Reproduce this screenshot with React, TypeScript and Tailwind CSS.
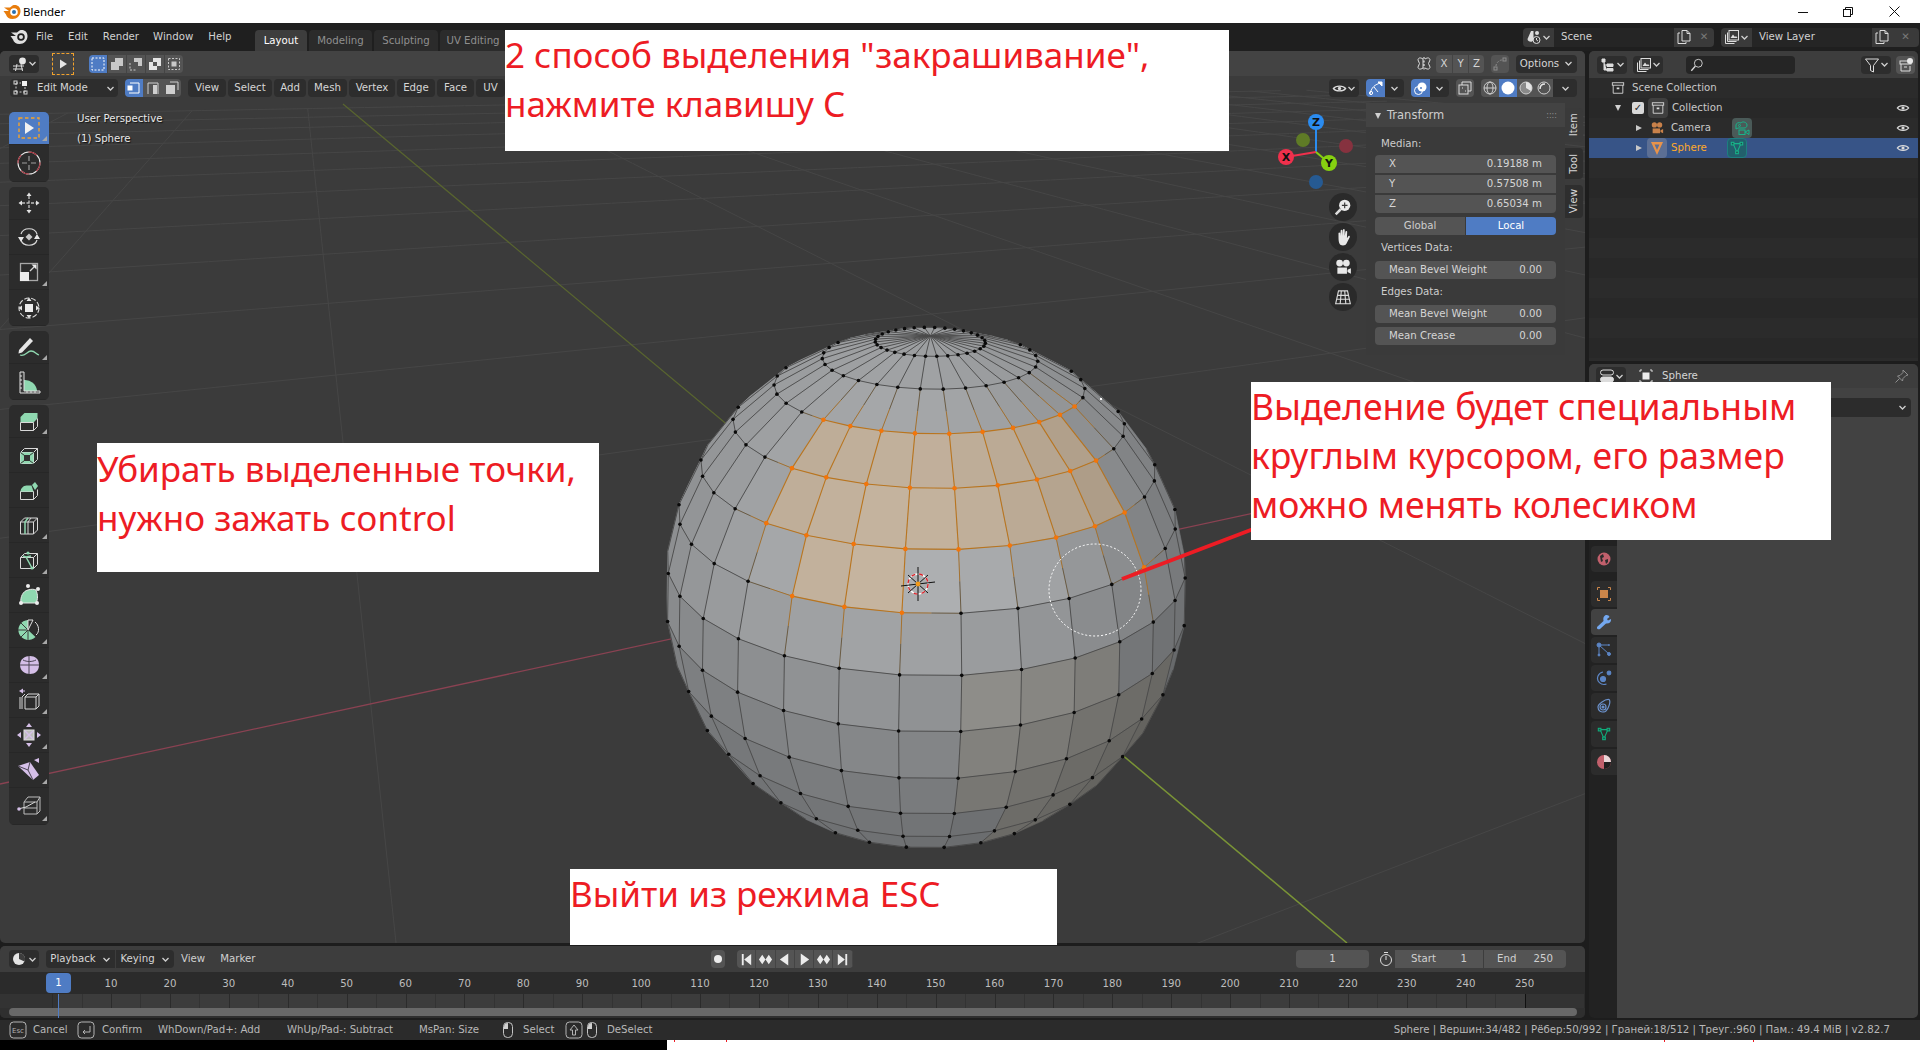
import { ReactNode } from 'react'

const GREEN = '#8fd8b0'
const PURPLE = '#d5bfe8'

// ---- 3D scene -------------------------------------------------------------
const CX = 926
const CY = 588
const DIST = 4.5
const TILT = (27 * Math.PI) / 180
const ROLL = (1 * Math.PI) / 180
const SCALE = 261 * Math.sqrt(DIST * DIST - 1)
const YAW = (26.5 * Math.PI) / 180

type P = { x: number; y: number; f: number }

function project(sx: number, up: number, fz: number): P & { z: number } {
  const y = up * Math.cos(TILT) - fz * Math.sin(TILT)
  const z = up * Math.sin(TILT) + fz * Math.cos(TILT)
  const k = SCALE / (DIST - z)
  const dx = sx * k
  const dy = -y * k
  return {
    x: CX + dx * Math.cos(ROLL) - dy * Math.sin(ROLL),
    y: CY + dx * Math.sin(ROLL) + dy * Math.cos(ROLL),
    f: z * DIST - 1,
    z,
  }
}

const SEG = 32
const RINGS = 16
const STEP = (11.25 * Math.PI) / 180
const OFFSET = (-4.5 * Math.PI) / 180

function vert(ring: number, k: number) {
  const phi = ring * STEP
  const th = OFFSET + k * STEP
  return project(Math.sin(phi) * Math.sin(th), Math.cos(phi), Math.sin(phi) * Math.cos(th))
}

function isSelFace(ring: number, k: number) {
  if ((ring === 3 || ring === 4) && k >= -3 && k <= 4) return true
  return ring === 5 && k >= -2 && k <= -1
}

function isSelVert(ring: number, k: number) {
  if (ring === 3) return k >= -3 && k <= 6
  if (ring === 4 || ring === 5) return k >= -3 && k <= 5
  if (ring === 6) return (k >= -2 && k <= 0) || k === 5
  return false
}

function shade(px: number, py: number, sel: boolean) {
  const sx = (px - CX) / 261
  const sy = (CY - py) / 261
  let v = 176 - 46 * sx * sx - 12 * sx
  v -= sy > 0 ? 20 * sy * sy : 66 * -sy
  let r = v - 2
  let g = v
  let b = v + 2
  if (sy < -0.3 && sx > 0.2) {
    r += 3
    b -= 6
  }
  if (sel) {
    r = r * 0.72 + 255 * 0.28
    g = g * 0.72 + 189 * 0.28
    b = b * 0.72 + 109 * 0.28
  }
  return `rgb(${r | 0},${g | 0},${b | 0})`
}

function Sphere() {
  const faces: ReactNode[] = []
  const edges: ReactNode[] = []
  const dots: ReactNode[] = []
  const wrap = (k: number) => (k >= SEG - 8 ? k - SEG : k)

  for (let ring = 0; ring < RINGS; ring++) {
    for (let i = 0; i < SEG; i++) {
      const k = wrap(i)
      const a = vert(ring, k)
      const b = vert(ring, k + 1)
      const c = vert(ring + 1, k + 1)
      const d = vert(ring + 1, k)
      const mx = (a.x + b.x + c.x + d.x) / 4
      const my = (a.y + b.y + c.y + d.y) / 4
      if (a.f + b.f + c.f + d.f <= -0.2) continue
      const fill = shade(mx, my, isSelFace(ring, k))
      faces.push(
        <polygon
          key={`${ring}-${i}`}
          points={`${a.x},${a.y} ${b.x},${b.y} ${c.x},${c.y} ${d.x},${d.y}`}
          fill={fill}
          stroke={fill}
          strokeWidth={0.6}
        />,
      )
    }
  }

  const edge = (key: string, a: P, b: P, sa: boolean, sb: boolean) => {
    if (a.f + b.f <= -0.1) return
    if (sa && sb) {
      edges.push(<line key={key} x1={a.x} y1={a.y} x2={b.x} y2={b.y} stroke="#b9751f" strokeWidth={1.1} />)
    } else if (sa || sb) {
      const mx = (a.x + b.x) / 2
      const my = (a.y + b.y) / 2
      edges.push(
        <g key={key} strokeWidth={1}>
          <line x1={a.x} y1={a.y} x2={mx} y2={my} stroke={sa ? '#a5722f' : '#6b5c44'} />
          <line x1={mx} y1={my} x2={b.x} y2={b.y} stroke={sb ? '#a5722f' : '#6b5c44'} />
        </g>,
      )
    } else {
      edges.push(<line key={key} x1={a.x} y1={a.y} x2={b.x} y2={b.y} stroke="#4a4a4a" strokeWidth={0.9} />)
    }
  }

  for (let i = 0; i < SEG; i++) {
    const k = wrap(i)
    for (let ring = 0; ring < RINGS; ring++) {
      edge(`m${ring}-${i}`, vert(ring, k), vert(ring + 1, k), isSelVert(ring, k), isSelVert(ring + 1, k))
      if (ring > 0) {
        edge(`r${ring}-${i}`, vert(ring, k), vert(ring, k + 1), isSelVert(ring, k), isSelVert(ring, k + 1))
      }
    }
  }

  for (let ring = 1; ring < RINGS; ring++) {
    for (let i = 0; i < SEG; i++) {
      const k = wrap(i)
      const v = vert(ring, k)
      if (v.f <= -0.05) continue
      const s = isSelVert(ring, k)
      dots.push(<circle key={`d${ring}-${i}`} cx={v.x} cy={v.y} r={s ? 2.3 : 1.8} fill={s ? '#f2750a' : '#0a0a0a'} />)
    }
  }

  return (
    <g>
      {faces}
      {edges}
      {dots}
    </g>
  )
}

function Grid() {
  const lines: ReactNode[] = []
  const ground = (gx: number, gy: number) => {
    const sx = gx * Math.cos(YAW) + gy * Math.sin(YAW)
    const fz = -gx * Math.sin(YAW) + gy * Math.cos(YAW)
    return { sx, fz }
  }
  const seg = (x1: number, y1: number, x2: number, y2: number, key: string) => {
    const pts: string[] = []
    for (let t = 0; t <= 1; t += 0.02) {
      const g = ground(x1 + (x2 - x1) * t, y1 + (y2 - y1) * t)
      if (g.fz * Math.cos(TILT) > DIST - 0.4) continue
      const p = project(g.sx, 0, g.fz)
      pts.push(`${p.x},${p.y}`)
    }
    lines.push(<polyline key={key} points={pts.join(' ')} fill="none" stroke="#464646" strokeWidth={1} />)
  }
  for (let i = -12; i <= 12; i++) {
    if (i === 0) continue
    seg(i * 2, -24, i * 2, 24, `a${i}`)
    seg(-24, i * 2, 24, i * 2, `b${i}`)
  }
  return <g>{lines}</g>
}

function SceneCanvas() {
  return (
    <svg className="absolute inset-0" width={1585} height={892} viewBox="0 51 1585 892">
      <rect x={0} y={51} width={1585} height={892} fill="#3b3b3b" />
      <Grid />
      <line x1={0} y1={784} x2={1300} y2={503} stroke="#8a4252" strokeWidth={1.3} />
      <line x1={343} y1={104} x2={760} y2={452} stroke="#59652f" strokeWidth={1.2} />
      <line x1={760} y1={452} x2={1347} y2={943} stroke="#7a9436" strokeWidth={1.5} />
      <Sphere />
      <circle cx={1095} cy={590} r={46} fill="none" stroke="#fff" strokeWidth={1} strokeDasharray="2 2" />
      <rect x={1100} y={398} width={2} height={2} fill="#fff" />
      <g>
        <circle cx={918} cy={584} r={10} fill="none" stroke="#fff" strokeWidth={1.4} />
        <circle cx={918} cy={584} r={10} fill="none" stroke="#d8232a" strokeWidth={1.4} strokeDasharray="4 4" />
        <path d="M918 567v34M901 586l34-4M908 575l20 18M908 593l20-18" stroke="#111" strokeWidth={1} />
        <circle cx={918} cy={584} r={2.4} fill="#f29a1a" />
      </g>
    </svg>
  )
}

// ---- small icons ----------------------------------------------------------
function Chevron({ className = '' }: { className?: string }) {
  return (
    <svg width={9} height={9} viewBox="0 0 9 9" className={className}>
      <path d="M1.5 3 4.5 6 7.5 3" fill="none" stroke="#cfcfcf" strokeWidth={1.3} />
    </svg>
  )
}

function Ico({ children, size = 16 }: { children: ReactNode; size?: number }) {
  return (
    <svg width={size} height={size} viewBox="0 0 16 16" fill="none" stroke="#dcdcdc" strokeWidth={1}>
      {children}
    </svg>
  )
}

const Arrow = () => <path d="M5 3.5v9l7-4.5z" fill="#e6e6e6" stroke="none" />

function EditorView() {
  return (
    <Ico>
      <path d="M1 10h11M1 13h10M5 8 3.5 15M9 8l1.5 7" />
      <circle cx={10.5} cy={5} r={3.4} fill="#e6e6e6" stroke="none" />
    </Ico>
  )
}

function Eye({ s = 14 }: { s?: number }) {
  return (
    <Ico size={s}>
      <path d="M1.5 8C4 4.5 12 4.5 14.5 8 12 11.5 4 11.5 1.5 8z" strokeWidth={1.4} />
      <circle cx={8} cy={8} r={1.8} fill="#dcdcdc" stroke="none" />
    </Ico>
  )
}

function SceneIcon() {
  return (
    <Ico>
      <path d="M5 2 1.5 10c0 3 5 4 6 1V2z" fill="#dcdcdc" stroke="none" />
      <circle cx={11} cy={4} r={2} fill="#dcdcdc" stroke="none" />
      <circle cx={10.5} cy={11} r={3.5} />
      <path d="M10.5 9v2l1.5 1" />
    </Ico>
  )
}

function LayerIcon({ s = 16 }: { s?: number }) {
  return (
    <Ico size={s}>
      <rect x={5} y={1.5} width={9.5} height={9.5} fill="#3a3a3a" />
      <path d="M6.5 9 9 5.5 11 8l1-1 1.5 2z" fill="#dcdcdc" stroke="none" />
      <path d="M3.5 3.5v9h9M1.5 5.5v9h9" />
    </Ico>
  )
}

function CopyIcon() {
  return (
    <Ico>
      <path d="M6 1.5h5l3 3V12H6z" />
      <path d="M4 4H2v10.5h8V13" />
      <path d="M11 1.5v3h3" />
    </Ico>
  )
}

function Collection({ s = 14 }: { s?: number }) {
  return (
    <Ico size={s}>
      <rect x={1.5} y={2} width={13} height={2.8} />
      <path d="M2.5 4.8V14h11V4.8" />
      <path d="M6.5 8.5h3" strokeWidth={2} />
    </Ico>
  )
}

function CameraIcon({ c = '#c9814a', s = 14 }: { c?: string; s?: number }) {
  return (
    <svg width={s} height={s} viewBox="0 0 16 16" fill={c}>
      <circle cx={5} cy={4.5} r={3} />
      <circle cx={11} cy={4.5} r={3} />
      <rect x={3} y={8.5} width={8.5} height={5.5} />
      <path d="M12 10.5 15 9v5l-3-1.5z" />
    </svg>
  )
}

function CameraData() {
  return (
    <svg width={16} height={16} viewBox="0 0 16 16" fill="none" stroke="#18b48a" strokeWidth={1}>
      <path d="M2 9V5c0-2 3-3 5-2 1-2 6-1 6 2 0 2-1 3-3 3H4z" />
      <circle cx={5.5} cy={5.5} r={1} />
      <rect x={5} y={10} width={6} height={4.5} />
      <path d="M11 12l4-2v4.500z" />
    </svg>
  )
}

function MeshTri({ c = '#18b48a', s = 14 }: { c?: string; s?: number }) {
  return (
    <svg width={s} height={s} viewBox="0 0 16 16" fill="none" stroke={c} strokeWidth={1.2}>
      <path d="M3.5 3h9L8 13z" />
      <rect x={1.5} y={1.5} width={3} height={3} fill="#1d4f4f" />
      <rect x={11.5} y={1.5} width={3} height={3} fill="#1d4f4f" />
      <rect x={6.5} y={11.5} width={3} height={3} fill="#1d4f4f" />
    </svg>
  )
}

function MouseIcon({ left = false }: { left?: boolean }) {
  return (
    <svg width={12} height={18} viewBox="0 0 12 18" fill="none" stroke="#c4c4c4" strokeWidth={1}>
      <rect x={1.5} y={1.5} width={9} height={15} rx={4} />
      {left && <path d="M2 8h4V2C3.5 2 2 3.5 2 6z" fill="#d0d0d0" stroke="none" />}
    </svg>
  )
}

function KeyIcon({ children }: { children: ReactNode }) {
  return (
    <svg width={18} height={18} viewBox="0 0 18 18" fill="none" stroke="#b4b4b4" strokeWidth={1}>
      <rect x={1} y={1} width={16} height={16} rx={3.5} />
      {children}
    </svg>
  )
}

// ---- toolbar --------------------------------------------------------------
const CUBE = 'M3.5 9.5h13v11h-13zM16.5 20.5l4-4v-11l-4 4M3.5 9.5l4-4h13'

function ToolIcon({ name }: { name: string }) {
  const common = { width: 24, height: 24, viewBox: '0 0 24 24', fill: 'none', stroke: '#d9d9d9', strokeWidth: 1 }
  const arrows = (
    <path d="M12 1.5 9.5 5h5zM12 22.5 9.5 19h5zM1.5 12 5 9.5v5zM22.5 12 19 9.5v5z" fill="#e2e2e2" stroke="none" />
  )
  switch (name) {
    case 'select':
      return (
        <svg {...common}>
          <rect x={2} y={2} width={20} height={20} stroke="#f2a22c" strokeWidth={1.4} strokeDasharray="3.5 2.5" />
          <path d="M8 6v12l9-6z" fill="#f1f1f1" stroke="none" />
        </svg>
      )
    case 'cursor':
      return (
        <svg {...common}>
          <circle cx={12} cy={12} r={11} stroke="#e8e8e8" strokeWidth={1.1} />
          <circle cx={12} cy={12} r={11} stroke="#a02c37" strokeWidth={1.1} strokeDasharray="9 8" />
          <path d="M12 5v5M12 14v5M5 12h5M14 12h5" stroke="#9d9d9d" strokeWidth={1.2} />
        </svg>
      )
    case 'move':
      return (
        <svg {...common}>
          {arrows}
          <path d="M12 5v14M5 12h14" stroke="#bdbdbd" strokeWidth={1.4} strokeDasharray="3 1.5" />
        </svg>
      )
    case 'rotate':
      return (
        <svg {...common}>
          <path d="M4 9c2-7 14-7 16 0M4 15c2 7 14 7 16 0" strokeWidth={1.2} />
          <path d="M1 12h6l-3 5zM17 14h6l-3-5z" fill="#e6e6e6" stroke="none" />
          <path d="M12 8.5 15.5 12 12 15.5 8.5 12z" fill="#c8c8c8" stroke="none" />
        </svg>
      )
    case 'scale':
      return (
        <svg {...common}>
          <rect x={3.5} y={3.5} width={17} height={17} stroke="#a8a8a8" strokeWidth={1.3} />
          <rect x={3} y={12} width={9} height={9} fill="#ececec" stroke="none" />
          <path d="M13 11l5-5" strokeWidth={1.3} />
          <path d="M19.5 4.5v5l-5-5z" fill="#ececec" stroke="none" />
        </svg>
      )
    case 'transform':
      return (
        <svg {...common}>
          <circle cx={12} cy={12} r={10} strokeDasharray="5 2" strokeWidth={1.1} />
          <rect x={8} y={8} width={8} height={8} fill="#ececec" stroke="none" />
          {arrows}
        </svg>
      )
    case 'annotate':
      return (
        <svg {...common}>
          <path d="M2 15 13 3l3 3L5 17.5l-3.500 1z" fill="#e6e6e6" stroke="none" />
          <path d="M3 20c5 2 7-4 11-4s5 3 8 4" stroke={GREEN} strokeWidth={1.3} />
        </svg>
      )
    case 'measure':
      return (
        <svg {...common}>
          <path d="M7 10a12 12 0 0 1 13 11H7z" fill={GREEN} stroke="none" />
          <path d="M3 2h4v19h16v2H3z" fill="#3a3a3a" stroke="#e0e0e0" />
          <path d="M3 6h2M3 10h2M3 14h2M3 18h2M10 21v2M14 21v2M18 21v2" stroke="#e0e0e0" />
        </svg>
      )
    case 'extrude':
      return (
        <svg {...common}>
          <path d="M3.5 8h13v5.5h-13zM16.5 8l4-4H7.5l-4 4zM16.5 13.5l4-4V4l-4 4z" fill={GREEN} stroke="none" />
          <path d="M3.5 13.5h13v8h-13zM16.5 21.5l4-4V9.5" />
        </svg>
      )
    case 'inset':
      return (
        <svg {...common}>
          <path d={CUBE} />
          <path d="M3.5 9.5h13v11h-13z" fill={GREEN} stroke="none" />
          <rect x={7.5} y={12.5} width={5} height={5} fill="#333" stroke="#333" />
          <path d="M3.5 9.5l4 3M16.5 9.5l-4 3M3.5 20.5l4-3M16.5 20.5l-4-3" stroke="#333" />
        </svg>
      )
    case 'bevel':
      return (
        <svg {...common}>
          <path d="M3.5 13.5h13v8h-13zM16.5 21.5l4-4v-6" />
          <path d="M3.5 13.5c0-3 3-6 6-6h5l2 6z" fill={GREEN} stroke="none" />
          <path d="M15 7l3-3 3 4-3 4z" fill={GREEN} stroke="none" />
        </svg>
      )
    case 'loop':
      return (
        <svg {...common}>
          <path d="M3.5 9h13v12h-13zM16.5 21l4-4V5l-4 4M3.5 9l4-4h13" />
          <path d="M8 21V9l3-4" stroke={GREEN} strokeWidth={1.5} />
          <path d="M11 21V9l3-4" strokeWidth={1} />
        </svg>
      )
    case 'knife':
      return (
        <svg {...common}>
          <path d={CUBE} />
          <path d="M6 8l3 1 5-1M9 9l6 11" stroke={GREEN} strokeWidth={1.5} />
          <circle cx={11} cy={5} r={1.6} fill={GREEN} stroke="none" />
          <circle cx={15} cy={20} r={1.6} fill={GREEN} stroke="none" />
        </svg>
      )
    case 'poly':
      return (
        <svg {...common}>
          <path d="M4 20c-1-6 2-12 7-13 3-1 6-1 8 0 2 5 2 9 0 13z" fill={GREEN} stroke="#e8e8e8" />
          <g fill="#eee" stroke="none">
            <circle cx={11} cy={3} r={2} />
            <circle cx={21} cy={6} r={2} />
            <circle cx={4} cy={20} r={2} />
            <circle cx={20} cy={20} r={2} />
          </g>
        </svg>
      )
    case 'spin':
      return (
        <svg {...common}>
          <path d="M11 12 11 2A10 10 0 1 0 18.5 19z" fill={GREEN} stroke="none" />
          <path d="M11 12 4 5M11 12H1M11 12l-7 7M11 12v10" stroke="#3a3a3a" />
          <path d="M11 12V2h5l-5 10zM18 4c4 3 5 10 1 13" stroke="#e0e0e0" />
        </svg>
      )
    case 'smooth':
      return (
        <svg {...common}>
          <path d="M3 12c0-6 5-9 10-9s9 3 9 9-4 9-9 9-10-3-10-9z" fill={PURPLE} stroke="none" />
          <path d="M3 12h19M12 3v18M6 7c4 2 9 2 13 0" stroke="#4a4452" />
        </svg>
      )
    case 'slide':
      return (
        <svg {...common}>
          <path d="M8 9h11v12H8zM19 21l3-3V6l-3 3M8 9l3-3h11M5 21V9l3-3M3 21V9" />
          <path d="M2 3l4-2.500v5z" fill={PURPLE} stroke="none" />
          <path d="M6 3h2" stroke={PURPLE} />
        </svg>
      )
    case 'shrink':
      return (
        <svg {...common}>
          <rect x={7} y={7} width={10} height={10} fill="#bdbdbd" stroke="#e0e0e0" />
          <path d="M8 8l8 8M16 8l-8 8" stroke={PURPLE} strokeWidth={1.5} />
          <path d="M12 0 9 4h6zM12 24l-3-4h6zM0 12l4-3v6zM24 12l-4-3v6z" fill={PURPLE} stroke="none" />
        </svg>
      )
    case 'shear':
      return (
        <svg {...common}>
          <path d="M1 8l12-4 9 13-6 5z" fill={PURPLE} stroke="none" />
          <path d="M13 4l-2 8 5 10M1 8l10 4" stroke="#4a4452" />
          <path d="M17 2l5-2v5z" fill={PURPLE} stroke="none" />
        </svg>
      )
    default:
      return (
        <svg {...common}>
          <path d="M7 8h13v12H7zM20 20l3-3V3L20 8M7 8l4-5h12M7 14h13" stroke="#bcbcbc" />
          <path d="M1 15l8-2 9-5" stroke="#d8d8d8" />
          <circle cx={2} cy={15} r={1.8} fill={PURPLE} stroke="none" />
        </svg>
      )
  }
}

const TOOLS: { name: string; h: number; mark?: boolean }[][] = [
  [
    { name: 'select', h: 33, mark: true },
    { name: 'cursor', h: 37 },
  ],
  [
    { name: 'move', h: 33 },
    { name: 'rotate', h: 35 },
    { name: 'scale', h: 35, mark: true },
    { name: 'transform', h: 36 },
  ],
  [
    { name: 'annotate', h: 33, mark: true },
    { name: 'measure', h: 36 },
  ],
  [
    { name: 'extrude', h: 33, mark: true },
    { name: 'inset', h: 35 },
    { name: 'bevel', h: 35 },
    { name: 'loop', h: 35, mark: true },
    { name: 'knife', h: 35, mark: true },
    { name: 'poly', h: 35 },
    { name: 'spin', h: 35, mark: true },
    { name: 'smooth', h: 35, mark: true },
    { name: 'slide', h: 35, mark: true },
    { name: 'shrink', h: 35, mark: true },
    { name: 'shear', h: 35, mark: true },
    { name: 'rip', h: 37, mark: true },
  ],
]

function Toolbar() {
  return (
    <div className="absolute left-[9px] top-[61px] z-10 flex w-[40px] flex-col gap-[5px]">
      {TOOLS.map((group, i) => (
        <div key={i} className="flex flex-col overflow-hidden rounded-[5px] bg-[#2c2c2c]">
          {group.map((t) => (
            <div
              key={t.name}
              style={{ height: t.h }}
              className={`relative flex items-center justify-center border-b border-[#272727] ${t.name === 'select' ? 'bg-[#4f7cc4]' : ''}`}
            >
              <ToolIcon name={t.name} />
              {t.mark && (
                <span className="absolute bottom-[3px] right-[2px] h-0 w-0 border-b-[5px] border-l-[5px] border-b-[#a8a8a8] border-l-transparent" />
              )}
            </div>
          ))}
        </div>
      ))}
    </div>
  )
}

// ---- viewport headers -----------------------------------------------------
function Btn({ children, className = '' }: { children: ReactNode; className?: string }) {
  return (
    <div className={`flex h-[18px] items-center justify-center rounded-[4px] bg-[#2d2d2d] text-[#d6d6d6] ${className}`}>
      {children}
    </div>
  )
}

function Seg({ children, active, className = '' }: { children: ReactNode; active?: boolean; className?: string }) {
  return (
    <div className={`flex h-[18px] items-center justify-center ${active ? 'bg-[#4f7cc4]' : 'bg-[#545454]'} ${className}`}>
      {children}
    </div>
  )
}

function ToolHeader() {
  return (
    <div className="relative z-10 flex h-[25px] items-center bg-[#434343] pl-[9px] pr-[8px]">
      <Btn className="w-[30px] gap-0">
        <EditorView />
        <Chevron />
      </Btn>
      <div className="ml-[13px] flex h-[22px] w-[22px] items-center justify-center border border-dashed border-[#f2a22c]">
        <Ico>
          <Arrow />
        </Ico>
      </div>
      <div className="ml-[15px] flex overflow-hidden rounded-[4px]">
        <Seg active className="w-[18px]">
          <svg width={14} height={14} viewBox="0 0 14 14"><rect x={1} y={1} width={12} height={12} fill="none" stroke="#fff" strokeDasharray="2 1.5" /></svg>
        </Seg>
        <Seg className="w-[19px] border-l border-[#444]">
          <svg width={14} height={14} viewBox="0 0 14 14" fill="#c8c8c8"><path d="M5 1h8v8H9v4H1V5h4z" /></svg>
        </Seg>
        <Seg className="w-[19px] border-l border-[#444]">
          <svg width={14} height={14} viewBox="0 0 14 14" fill="#c8c8c8"><path d="M5 1h8v8H9V5H5z" /><path d="M1 6v7h7" fill="none" stroke="#c8c8c8" strokeDasharray="2 1.5" /></svg>
        </Seg>
        <Seg className="w-[19px] border-l border-[#444]">
          <svg width={14} height={14} viewBox="0 0 14 14" fill="#e4e4e4"><path d="M5 1h8v8H9V5H5zM1 5h4v4h4v4H1z" /></svg>
        </Seg>
        <Seg className="w-[19px] border-l border-[#444]">
          <svg width={14} height={14} viewBox="0 0 14 14"><rect x={1.5} y={1.5} width={11} height={11} fill="none" stroke="#c8c8c8" strokeDasharray="2 1.5" /><rect x={4.5} y={4.5} width={5} height={5} fill="#c8c8c8" /></svg>
        </Seg>
      </div>
      <div className="flex-1" />
      <Ico>
        <path d="M7 3C4 1 2 2 2 4l1.500 3.500L2 11c0 2 2 3 5 1z" />
        <path d="M9 3c3-2 5-1 5 1l-1.500 3.500L14 11c0 2-2 3-5 1" />
        <path d="M8 1v14" stroke="#fff" strokeDasharray="2 1.5" />
      </Ico>
      <div className="ml-[4px] flex overflow-hidden rounded-[4px] text-[#d6d6d6]">
        <Seg className="w-[16px]">X</Seg>
        <Seg className="w-[16px] border-l border-[#444]">Y</Seg>
        <Seg className="w-[16px] border-l border-[#444]">Z</Seg>
      </div>
      <Seg className="ml-[7px] w-[18px] rounded-[4px]">
        <svg width={14} height={14} viewBox="0 0 14 14" fill="none" stroke="#8c8c8c">
          <rect x={1} y={10} width={3} height={3} />
          <rect x={10} y={1} width={3} height={3} />
          <path d="M3 9c0-3 3-6 6-6" strokeDasharray="2 1.5" />
        </svg>
      </Seg>
      <Btn className="ml-[7px] w-[61px] gap-[5px]">
        Options
        <Chevron />
      </Btn>
    </div>
  )
}

function MenuBtn({ label, w }: { label: string; w: number }) {
  return (
    <Btn className="text-[#d0d0d0]">
      <span style={{ width: w }} className="text-center">
        {label}
      </span>
    </Btn>
  )
}

function ModeHeader() {
  return (
    <div className="relative z-10 flex h-[27px] items-center pl-[10px] pr-[8px] pb-[3px]">
      <Btn className="w-[108px] px-[3px]">
        <span className="flex flex-1 items-center gap-[9px]">
          <svg width={15} height={15} viewBox="0 0 15 15" fill="none" stroke="#cfcfcf">
            <path d="M3 3h5M3 3v9M12 7v5M3 12h9" strokeDasharray="2 1.5" />
            <rect x={1} y={1} width={3} height={3} />
            <rect x={1} y={11} width={3} height={3} />
            <rect x={11} y={11} width={3} height={3} />
            <rect x={9} y={1} width={5} height={5} fill="#f2f2f2" stroke="none" />
          </svg>
          Edit Mode
        </span>
        <Chevron />
      </Btn>
      <div className="ml-[7px] flex overflow-hidden rounded-[4px]">
        <Seg active className="w-[18px]">
          <svg width={14} height={14} viewBox="0 0 14 14" fill="none" stroke="#fff"><path d="M3 2h9v10H2" /><rect x={1} y={5} width={4} height={4} fill="#fff" /></svg>
        </Seg>
        <Seg className="w-[19px]">
          <svg width={14} height={14} viewBox="0 0 14 14" fill="none" stroke="#cfcfcf"><path d="M2 13V2h10v11" /><path d="M7 4h4v9H7z" fill="#cfcfcf" stroke="none" /></svg>
        </Seg>
        <Seg className="w-[19px]">
          <svg width={14} height={14} viewBox="0 0 14 14" fill="none" stroke="#cfcfcf"><path d="M5 1h8v8" /><rect x={1} y={4} width={9} height={9} fill="#cfcfcf" stroke="none" /></svg>
        </Seg>
      </div>
      <div className="ml-[7px] flex gap-[2px]">
        <MenuBtn label="View" w={38} />
        <MenuBtn label="Select" w={44} />
        <MenuBtn label="Add" w={32} />
        <MenuBtn label="Mesh" w={39} />
        <MenuBtn label="Vertex" w={46} />
        <MenuBtn label="Edge" w={38} />
        <MenuBtn label="Face" w={37} />
        <MenuBtn label="UV" w={29} />
      </div>
      <div className="flex-1" />
      <Btn className="w-[30px]">
        <Eye s={15} />
        <Chevron />
      </Btn>
      <div className="ml-[7px] flex overflow-hidden rounded-[4px]">
        <Seg active className="w-[19px]">
          <svg width={15} height={15} viewBox="0 0 15 15" fill="none" stroke="#fff"><path d="M2 13C3 7 7 3 13 2" /><circle cx={3} cy={12} r={1.6} /><path d="M10 1h4v4z" fill="#fff" /><path d="M6 6l4 5" /></svg>
        </Seg>
        <Btn className="w-[19px] rounded-none"><Chevron /></Btn>
      </div>
      <div className="ml-[7px] flex overflow-hidden rounded-[4px]">
        <Seg active className="w-[19px]">
          <svg width={15} height={15} viewBox="0 0 15 15" fill="none" stroke="#fff"><circle cx={5.500} cy={9.500} r={4} /><circle cx={9} cy={6} r={4.500} fill="#fff" stroke="none" /><circle cx={8} cy={7} r={1} fill="#4f7cc4" stroke="none" /></svg>
        </Seg>
        <Btn className="w-[19px] rounded-none"><Chevron /></Btn>
      </div>
      <Seg className="ml-[7px] w-[18px] rounded-[4px]">
        <svg width={14} height={14} viewBox="0 0 14 14" fill="none" stroke="#dcdcdc"><path d="M4 4V1h9v9h-3" /><rect x={1} y={4} width={9} height={9} /><path d="M4 7h1M7 10h1" /></svg>
      </Seg>
      <div className="ml-[7px] flex overflow-hidden rounded-[4px]">
        <Seg className="w-[18px]">
          <svg width={14} height={14} viewBox="0 0 14 14" fill="none" stroke="#cfcfcf"><circle cx={7} cy={7} r={6} /><ellipse cx={7} cy={7} rx={3} ry={6} /><path d="M1 7h12" /></svg>
        </Seg>
        <Seg active className="w-[18px]">
          <svg width={14} height={14} viewBox="0 0 14 14"><circle cx={7} cy={7} r={6.500} fill="#fff" /></svg>
        </Seg>
        <Seg className="w-[18px]">
          <svg width={14} height={14} viewBox="0 0 14 14"><circle cx={7} cy={7} r={6} fill="#8a8a8a" stroke="#cfcfcf" /><path d="M7 1a6 6 0 0 1 5 9L7 7z" fill="#e4e4e4" /></svg>
        </Seg>
        <Seg className="w-[18px]">
          <svg width={14} height={14} viewBox="0 0 14 14" fill="none"><circle cx={7} cy={7} r={6} stroke="#cfcfcf" /><path d="M3 8c0-3 2-5 5-5" stroke="#e8e8e8" strokeWidth={1.500} /></svg>
        </Seg>
        <Btn className="w-[24px] rounded-none"><Chevron /></Btn>
      </div>
    </div>
  )
}

// ---- N panel --------------------------------------------------------------
function NumField({ label, value, className = '' }: { label: string; value: string; className?: string }) {
  return (
    <div className={`flex h-[18px] items-center justify-between bg-[#545454] pl-[14px] pr-[14px] text-[#d4d4d4] ${className}`}>
      <span>{label}</span>
      <span>{value}</span>
    </div>
  )
}

function SidePanel() {
  return (
    <div className="absolute right-[2px] top-[52px] z-10 flex">
      <div className="flex h-[252px] w-[199px] flex-col bg-[#3a3a3a] text-[#cdcdcd]">
        <div className="flex h-[24px] items-center justify-between bg-[#434343] pl-[9px] pr-[8px] pt-[1px]">
          <span className="flex items-center gap-[6px] text-[11.500px]">
            <span className="h-0 w-0 border-x-[3.500px] border-t-[6px] border-x-transparent border-t-[#d0d0d0]" />
            Transform
          </span>
          <span className="text-[8px] leading-none text-[#8f8f8f]">::::</span>
        </div>
        <div className="flex flex-col px-[9px]">
          <div className="flex h-[28px] items-center pl-[6px] pt-[6px]">Median:</div>
          <div className="flex flex-col gap-[2px] overflow-hidden rounded-[4px]">
            <NumField label="X" value="0.19188 m" />
            <NumField label="Y" value="0.57508 m" />
            <NumField label="Z" value="0.65034 m" />
          </div>
          <div className="mt-[4px] flex h-[18px] overflow-hidden rounded-[4px]">
            <div className="flex flex-1 items-center justify-center bg-[#545454]">Global</div>
            <div className="ml-[1px] flex flex-1 items-center justify-center bg-[#4f7cc4] text-white">Local</div>
          </div>
          <div className="flex h-[26px] items-center pl-[6px]">Vertices Data:</div>
          <NumField label="Mean Bevel Weight" value="0.00" className="rounded-[4px]" />
          <div className="flex h-[26px] items-center pl-[6px]">Edges Data:</div>
          <NumField label="Mean Bevel Weight" value="0.00" className="rounded-[4px]" />
          <NumField label="Mean Crease" value="0.00" className="mt-[4px] rounded-[4px]" />
        </div>
      </div>
      <div className="mt-[5px] flex w-[18px] flex-col gap-[6px] text-[#d6d6d6]">
        <VTab label="Item" h={34} active />
        <VTab label="Tool" h={31} />
        <VTab label="View" h={33} />
      </div>
    </div>
  )
}

function VTab({ label, h, active }: { label: string; h: number; active?: boolean }) {
  return (
    <div
      style={{ height: h }}
      className={`flex items-center justify-center rounded-r-[4px] ${active ? 'bg-[#3a3a3a]' : 'bg-[#2e2e2e]'}`}
    >
      <span className="rotate-180 [writing-mode:vertical-rl]">{label}</span>
    </div>
  )
}

function Gizmo() {
  const ball = (x: number, y: number, c: string, t?: string) => (
    <g>
      <circle cx={x} cy={y} r={t ? 8 : 7} fill={c} />
      {t && (
        <text x={x} y={y + 4} textAnchor="middle" fontSize={11} fontWeight={700} fill="#111" fontFamily="DejaVu Sans">
          {t}
        </text>
      )}
    </g>
  )
  return (
    <svg className="absolute left-[1276px] top-[57px] z-10" width={84} height={84} viewBox="1276 108 84 84">
      {ball(1303, 140, '#5f7b26')}
      {ball(1346, 146, '#86323f')}
      {ball(1316, 182, '#265a92')}
      <path d="M1316 152V122" stroke="#2b8cf0" strokeWidth={2} />
      <path d="M1316 152 1286 157" stroke="#f0304c" strokeWidth={2} />
      <path d="M1316 152 1329 163" stroke="#86d010" strokeWidth={2} />
      {ball(1286, 157, '#f0304c', 'X')}
      {ball(1329, 163, '#86d010', 'Y')}
      {ball(1316, 122, '#2b8cf0', 'Z')}
    </svg>
  )
}

function NavButtons() {
  const cell = 'flex h-[28px] w-[28px] items-center justify-center rounded-full bg-[#2a2a2a]'
  return (
    <div className="absolute left-[1329px] top-[142px] z-10 flex flex-col gap-[2px]">
      <div className={cell}>
        <Ico size={18}>
          <circle cx={9.500} cy={6.500} r={5} fill="#e8e8e8" stroke="none" />
          <path d="M9.500 4v5M7 6.500h5" stroke="#333" />
          <path d="M6 10 1.500 14.500" strokeWidth={2.200} />
        </Ico>
      </div>
      <div className={cell}>
        <svg width={18} height={18} viewBox="0 0 16 16" fill="#e8e8e8">
          <path d="M4 8V4.500a.8.8 0 0 1 1.500 0V7l.5-5a.8.8 0 0 1 1.500 0V7l.5-5.500a.8.8 0 0 1 1.500 0V7l.7-4a.8.8 0 0 1 1.500 .3L11.500 9l1-1.500c.6-1 2-.4 1.500 .7L11 14c-.5 1-1.500 1.500-3 1.500-3 0-4-2-4-7.500z" />
        </svg>
      </div>
      <div className={cell}>
        <CameraIcon c="#e8e8e8" s={18} />
      </div>
      <div className={cell}>
        <Ico size={18}>
          <path d="M4 2.500h8L14.500 14h-13zM3 6.500h10M2.200 10h11.600M6.500 2.500 5.500 14M9.500 2.500l1 11.500" />
        </Ico>
      </div>
    </div>
  )
}

// ---- timeline -------------------------------------------------------------
const frameX = (f: number) => 58 + (f - 1) * 5.89
const FRAMES = Array.from({ length: 25 }, (_, i) => (i + 1) * 10)
const TICKS = Array.from({ length: 54 }, (_, i) => i * 5)

function TransportIcons() {
  const icons = [
    'M3 2h2v12H3zM13 2v12L5.500 8z',
    'M1 8l3.500-5L8 8l-3.500 5zM8 8l3.500-5L15 8l-3.500 5z',
    'M12 1.500v13L3 8z',
    'M4 1.500v13L13 8z',
    'M1 8l3.500-5L8 8l-3.500 5zM8 8l3.500-5L15 8l-3.500 5z',
    'M13 2h-2v12h2zM3 2v12l7.500-6z',
  ]
  return (
    <div className="ml-[12px] flex overflow-hidden rounded-[4px]">
      {icons.map((d, i) => (
        <div key={i} className="flex h-[18px] w-[19.300px] items-center justify-center border-r border-[#444] bg-[#545454]">
          <svg width={15} height={15} viewBox="0 0 16 16" fill="#ececec">
            <path d={d} />
          </svg>
        </div>
      ))}
    </div>
  )
}

function Timeline() {
  return (
    <div className="relative mt-[3px] flex h-[72px] flex-col overflow-hidden rounded-[5px] bg-[#2b2b2b] text-[#d0d0d0]">
      <div className="flex h-[26px] items-center bg-[#3d3d3d] pl-[9px] pr-[19px]">
        <div className="flex w-[702px] items-center">
          <Btn className="w-[30px]">
            <Ico>
              <circle cx={7} cy={8} r={6} fill="#e4e4e4" stroke="none" />
              <path d="M7 8V2A6 6 0 0 1 12.500 10.500z" fill="#3d3d3d" stroke="none" />
            </Ico>
            <Chevron />
          </Btn>
          <div className="ml-[7px] flex overflow-hidden rounded-[4px]">
            <Btn className="w-[69px] gap-[6px] rounded-none">
              Playback
              <Chevron />
            </Btn>
            <Btn className="ml-[1px] w-[58px] gap-[6px] rounded-none">
              Keying
              <Chevron />
            </Btn>
          </div>
          <span className="ml-[7px]">View</span>
          <span className="ml-[15px]">Marker</span>
        </div>
        <Seg className="w-[14px] rounded-[4px]">
          <span className="h-[8px] w-[8px] rounded-full bg-[#ececec]" />
        </Seg>
        <TransportIcons />
        <div className="flex-1" />
        <Seg className="w-[73px] rounded-[4px]">1</Seg>
        <div className="ml-[7px] flex w-[19px] justify-center">
          <Ico>
            <circle cx={8} cy={9} r={5.500} />
            <path d="M6 1.500h4M8 9V5" />
          </Ico>
        </div>
        <div className="flex overflow-hidden rounded-r-[4px]">
          <div className="flex h-[18px] w-[88px] items-center justify-between bg-[#545454] px-[16px]">
            <span>Start</span>
            <span>1</span>
          </div>
          <div className="ml-[1px] flex h-[18px] w-[82px] items-center justify-between bg-[#545454] px-[13px]">
            <span>End</span>
            <span>250</span>
          </div>
        </div>
      </div>
      <div className="relative h-[22px] bg-[#2b2b2b]">
        {FRAMES.map((f) => (
          <span key={f} style={{ left: frameX(f) - 20 }} className="absolute top-[4px] w-[40px] text-center text-[#bdbdbd]">
            {f}
          </span>
        ))}
        <div className="absolute left-[46px] top-[1px] flex h-[20px] w-[25px] items-center justify-center rounded-[4px] bg-[#4f7cc4] text-white">
          1
        </div>
      </div>
      <div className="relative h-[14px] bg-[#333]">
        <div className="absolute inset-y-0 left-[58px] w-[1467px] bg-[#3c3c3c]" />
        {TICKS.map((f) => (
          <span key={f} style={{ left: frameX(f) }} className={`absolute inset-y-0 w-px ${f % 10 === 0 ? 'bg-[#2b2b2b]' : 'bg-[#333]'}`} />
        ))}
        <span className="absolute inset-y-0 left-[1525px] w-px bg-[#111]" />
      </div>
      <div className="flex flex-1 items-start bg-[#2f2f2f] pl-[9px] pr-[8px]">
        <div className="h-[8px] w-full rounded-full bg-[#686868]" />
      </div>
      <span className="absolute bottom-0 left-[58px] top-[48px] w-px bg-[#4f7cc4]" />
    </div>
  )
}

// ---- outliner + properties ------------------------------------------------
function Row({ children, shade: dark, active }: { children?: ReactNode; shade?: boolean; active?: boolean }) {
  return (
    <div className={`flex h-[20px] items-center ${active ? 'bg-[#375487]' : dark ? 'bg-[#282828]' : 'bg-[#2b2b2b]'}`}>
      {children}
    </div>
  )
}

function Outliner() {
  const chip = 'flex h-[20px] w-[20px] items-center justify-center rounded-[4px]'
  return (
    <div className="flex h-[310px] flex-col overflow-hidden rounded-t-[5px] bg-[#2b2b2b] text-[#c8c8c8]">
      <div className="flex h-[27px] shrink-0 items-center bg-[#3d3d3d] pl-[8px] pr-[3px]">
        <Btn className="w-[30px]">
          <Ico>
            <path d="M2 2h3v3H2zM7 7h6v2.500H7zM7 11.500h6V14H7zM4 5v8h3M4 8h3" fill="#dcdcdc" stroke="#dcdcdc" />
          </Ico>
          <Chevron />
        </Btn>
        <Btn className="ml-[6px] w-[30px]">
          <LayerIcon />
          <Chevron />
        </Btn>
        <div className="ml-[23px] flex h-[18px] w-[109px] items-center rounded-[4px] bg-[#252525] pl-[4px]">
          <Ico size={14}>
            <circle cx={9.500} cy={6} r={4.500} />
            <path d="M6 9.500 1.500 14.500" strokeWidth={1.500} />
          </Ico>
        </div>
        <div className="flex-1" />
        <Btn className="w-[30px]">
          <Ico>
            <path d="M1.500 2h13L9.500 8.500V15l-3-1.500v-5z" />
          </Ico>
          <Chevron />
        </Btn>
        <Seg className="ml-[5px] w-[19px] rounded-[4px]">
          <Ico>
            <rect x={2} y={4} width={11} height={3} />
            <path d="M3 7v7h9V9M6 10h3" />
            <circle cx={12} cy={4} r={3} fill="#e8e8e8" stroke="none" />
          </Ico>
        </Seg>
      </div>
      <Row>
        <span className="ml-[18px] flex w-[22px] justify-center">
          <Collection />
        </span>
        <span className="ml-[3px]">Scene Collection</span>
      </Row>
      <Row shade>
        <span className="ml-[26px] h-0 w-0 border-x-[3.500px] border-t-[6px] border-x-transparent border-t-[#d0d0d0]" />
        <span className="ml-[11px] flex h-[12px] w-[12px] items-center justify-center rounded-[2px] bg-[#d8d8d8] text-[10px] leading-none text-[#222]">✓</span>
        <span className="ml-[4px] flex h-[20px] w-[20px] items-center justify-center rounded-[4px] bg-[#3f3f3f]">
          <Collection />
        </span>
        <span className="ml-[4px] flex-1">Collection</span>
        <span className="mr-[8px]"><Eye /></span>
      </Row>
      <Row>
        <span className="ml-[47px] h-0 w-0 border-y-[3.500px] border-l-[6px] border-y-transparent border-l-[#c8c8c8]" />
        <span className="ml-[5px] flex w-[20px] justify-center"><CameraIcon /></span>
        <span className="ml-[4px] w-[61px]">Camera</span>
        <span className={`${chip} bg-[#4a5a58]`}>
          <CameraData />
        </span>
        <span className="flex-1" />
        <span className="mr-[8px]"><Eye /></span>
      </Row>
      <Row active>
        <span className="ml-[47px] h-0 w-0 border-y-[3.500px] border-l-[6px] border-y-transparent border-l-[#c8c8c8]" />
        <span className="ml-[5px] flex h-[20px] w-[20px] items-center justify-center rounded-[4px] bg-[#5c6f94]">
          <svg width={16} height={16} viewBox="0 0 16 16"><path d="M2 2h12L8 15z" fill="#e8934a" /><path d="M5.500 4.500h5L8 10z" fill="#5c6f94" /></svg>
        </span>
        <span className="ml-[4px] w-[56px] text-[#ffaa2a]">Sphere</span>
        <span className={`${chip} border border-[#1d7f80] bg-[#22606c]`}>
          <MeshTri />
        </span>
        <span className="flex-1" />
        <span className="mr-[8px]"><Eye /></span>
      </Row>
      {Array.from({ length: 10 }, (_, i) => (
        <Row key={i} shade={i % 2 === 1} />
      ))}
    </div>
  )
}

function PropTab({ children, active, className = '' }: { children: ReactNode; active?: boolean; className?: string }) {
  return (
    <div className={`flex h-[26px] w-[26px] items-center justify-center rounded-l-[4px] ${active ? 'bg-[#424242]' : 'bg-[#2c2c2c]'} ${className}`}>
      {children}
    </div>
  )
}

function Properties() {
  return (
    <div className="mt-[3px] flex flex-1 flex-col overflow-hidden rounded-[5px] bg-[#222]">
      <div className="flex h-[24px] shrink-0 items-center bg-[#3d3d3d] pl-[7px] pr-[8px] text-[#d6d6d6]">
        <Btn className="w-[30px]">
          <Ico>
            <rect x={1.500} y={2} width={13} height={5} rx={2.500} />
            <rect x={1.500} y={9} width={13} height={5} rx={2.500} fill="#dcdcdc" />
          </Ico>
          <Chevron />
        </Btn>
        <span className="ml-[12px]">
          <Ico>
            <rect x={4.500} y={4.500} width={7} height={7} fill="#ececec" stroke="none" />
            <path d="M2 4V2h2M12 2h2v2M2 12v2h2M12 14h2v-2" />
          </Ico>
        </span>
        <span className="ml-[8px]">Sphere</span>
        <div className="flex-1" />
        <Ico>
          <path d="M9 2 14 7l-2 .5-3 3-.5 2.500L3.500 8l2.500-.5 3-3zM5.500 10.500 1.500 14.500" stroke="#8f8f8f" />
        </Ico>
      </div>
      <div className="flex flex-1">
        <div className="flex w-[28px] flex-col pl-[2px] pt-[158px]">
          <PropTab>
            <svg width={16} height={16} viewBox="0 0 16 16">
              <circle cx={8} cy={8} r={6.500} fill="#c2606c" />
              <path d="M4 5l3-2 1 3-2 1 1 3-2 1zM9 9l3-1 0 3-2 2z" fill="#2c2c2c" />
            </svg>
          </PropTab>
          <PropTab className="mt-[9px]">
            <svg width={16} height={16} viewBox="0 0 16 16" fill="none" stroke="#c9854a">
              <rect x={4} y={4} width={8} height={8} fill="#c9854a" stroke="none" />
              <path d="M1.500 4V1.500H4M12 1.500h2.500V4M1.500 12v2.500H4M12 14.500h2.500V12" />
            </svg>
          </PropTab>
          <PropTab active className="mt-[2px]">
            <svg width={16} height={16} viewBox="0 0 16 16" fill="#74a8ef">
              <path d="M9 1.500c2-1 4 0 4.500 1.500L11 5l1 1.500 3-1.500c.5 2.500-1.500 5-5 4.500L4 15c-2 1.200-4-1-2.500-2.500l6-5.500C7 4.500 7.500 2.500 9 1.500z" />
            </svg>
          </PropTab>
          <PropTab className="mt-[2px]">
            <svg width={16} height={16} viewBox="0 0 16 16" fill="#5c85c4" stroke="#5c85c4">
              <circle cx={3} cy={3} r={2} />
              <circle cx={13} cy={12} r={1.500} />
              <circle cx={3} cy={13} r={1} />
              <circle cx={13} cy={3} r={0.500} />
              <path d="M3 3h10M3 3l10 9M3 3v10" fill="none" />
            </svg>
          </PropTab>
          <PropTab className="mt-[2px]">
            <svg width={16} height={16} viewBox="0 0 16 16" fill="none" stroke="#5c85c4" strokeWidth={1.200}>
              <circle cx={7} cy={9} r={2.500} fill="#5c85c4" />
              <path d="M10.500 14C5 16 0 11 2 6c.8-2 2.500-3.500 5-4" />
              <circle cx={13} cy={3} r={1.800} fill="#5c85c4" />
            </svg>
          </PropTab>
          <PropTab className="mt-[2px]">
            <svg width={16} height={16} viewBox="0 0 16 16" fill="none" stroke="#6c92cc" strokeWidth={1.200}>
              <path d="M2 9c0-3 7-8 11-7.500 2 1.500 0 9-3.500 12C5 15 2 13 2 9z" />
              <circle cx={7} cy={9} r={3} />
              <circle cx={7} cy={9} r={1} fill="#6c92cc" />
            </svg>
          </PropTab>
          <PropTab className="mt-[2px]">
            <MeshTri c="#10b07c" />
          </PropTab>
          <PropTab className="mt-[2px]">
            <svg width={16} height={16} viewBox="0 0 16 16">
              <circle cx={8} cy={8} r={7} fill="#c2606c" />
              <path d="M8 8h7a7 7 0 0 1-7 7z" fill="#1f1f1f" />
              <path d="M8 8V1a7 7 0 0 1 7 7z" fill="#e9d6d8" />
            </svg>
          </PropTab>
        </div>
        <div className="flex-1 bg-[#424242] pl-[10px] pr-[7px] pt-[10px]">
          <div className="flex h-[19px] items-center justify-end rounded-[4px] bg-[#2c2c2c] pr-[4px]">
            <Chevron />
          </div>
        </div>
      </div>
    </div>
  )
}

// ---- annotations ----------------------------------------------------------
function Note({ className, lines }: { className: string; lines: string[] }) {
  return (
    <div className={`absolute z-20 bg-white leading-[49px] text-[#ed1c24] [font-family:'Noto_Sans',sans-serif] ${className}`}>
      {lines.map((l) => (
        <div key={l} className="whitespace-nowrap">
          {l}
        </div>
      ))}
    </div>
  )
}

function Logo({ color, inner }: { color: string; inner: string }) {
  return (
    <svg width={18} height={16} viewBox="0 0 18 16">
      <path d="M0.500 7 6 7 1 3.500h6L9.500 1.500c4-1.500 8 1 8 5.500s-3.500 8-8 8c-3.500 0-6-2-6.500-4.500L0.500 7z" fill={color} />
      <circle cx={11} cy={8} r={3.800} fill={inner} />
      <circle cx={11} cy={8} r={2} fill={color === '#e87d0d' ? '#2a6fb0' : color} />
    </svg>
  )
}

export default function App() {
  const wc = "text-[10.200px] [font-family:'DejaVu_Sans',sans-serif]"
  return (
    <div className={`relative flex h-[1050px] w-[1920px] flex-col overflow-hidden bg-[#1d1d1d] ${wc}`}>
      {/* title bar */}
      <div className="flex h-[23px] shrink-0 items-center bg-white pl-[3px] text-black">
        <Logo color="#e87d0d" inner="#ffffff" />
        <span className="ml-[2px] text-[11.500px] [font-family:'Noto_Sans',sans-serif]">Blender</span>
        <div className="flex-1" />
        <svg width={10} height={10} viewBox="0 0 10 10" className="mr-[35px]"><path d="M0 5.500h10" stroke="#111" /></svg>
        <svg width={10} height={10} viewBox="0 0 10 10" fill="none" stroke="#111" className="mr-[36px]"><rect x={0.500} y={2.500} width={7} height={7} /><path d="M2.500 2.500v-2h7v7h-2" /></svg>
        <svg width={11} height={11} viewBox="0 0 11 11" stroke="#111" className="mr-[20px]"><path d="M0.500 0.500 10.500 10.500M10.500 0.500 0.500 10.500" /></svg>
      </div>

      {/* top bar */}
      <div className="flex h-[28px] shrink-0 items-center bg-[#1f1f1f] text-[#d2d2d2]">
        <div className="flex w-[255px] items-center">
          <span className="ml-[9px] flex w-[20px] justify-center">
            <Logo color="#e0e0e0" inner="#1f1f1f" />
          </span>
          <span className="ml-[7px]">File</span>
          <span className="ml-[15px]">Edit</span>
          <span className="ml-[15px]">Render</span>
          <span className="ml-[14px]">Window</span>
          <span className="ml-[15px]">Help</span>
        </div>
        <div className="flex h-[21px] gap-[2px] self-end">
          <span className="flex w-[52px] items-center justify-center rounded-t-[4px] bg-[#3d3d3d] text-white">Layout</span>
          <span className="flex w-[63px] items-center justify-center rounded-t-[4px] bg-[#2b2b2b] text-[#8f8f8f]">Modeling</span>
          <span className="flex w-[64px] items-center justify-center rounded-t-[4px] bg-[#2b2b2b] text-[#8f8f8f]">Sculpting</span>
          <span className="flex w-[66px] items-center justify-center rounded-t-[4px] bg-[#2b2b2b] text-[#8f8f8f]">UV Editing</span>
        </div>
        <div className="flex-1" />
        <div className="flex h-[19px] items-center rounded-[4px] bg-[#3a3a3a]">
          <span className="flex w-[31px] items-center justify-center"><SceneIcon /><Chevron /></span>
          <span className="flex h-full w-[120px] items-center bg-[#252525] pl-[7px]">Scene</span>
          <span className="flex w-[20px] justify-center"><CopyIcon /></span>
          <span className="flex w-[20px] justify-center text-[#777]">✕</span>
        </div>
        <div className="ml-[7px] mr-[1px] flex h-[19px] items-center rounded-[4px] bg-[#3a3a3a]">
          <span className="flex w-[31px] items-center justify-center"><LayerIcon /><Chevron /></span>
          <span className="flex h-full w-[120px] items-center bg-[#252525] pl-[7px]">View Layer</span>
          <span className="flex w-[20px] justify-center"><CopyIcon /></span>
          <span className="flex w-[27px] justify-center text-[#777]">✕</span>
        </div>
      </div>

      {/* workspace */}
      <div className="flex h-[969px] shrink-0">
        <div className="flex w-[1585px] flex-col">
          <div className="relative h-[892px] overflow-hidden rounded-[5px] text-[#d6d6d6]">
            <SceneCanvas />
            <ToolHeader />
            <ModeHeader />
            <Toolbar />
            <div className="absolute left-[77px] top-[60px] z-10 flex flex-col gap-[5px] text-[#e8e8e8] [text-shadow:1px_1px_1px_#111]">
              <span>User Perspective</span>
              <span>(1) Sphere</span>
            </div>
            <Gizmo />
            <NavButtons />
            <SidePanel />
          </div>
          <Timeline />
        </div>
        <div className="ml-[4px] mr-[2px] flex h-[967px] flex-1 flex-col">
          <Outliner />
          <Properties />
        </div>
      </div>

      {/* status bar */}
      <div className="flex h-[20px] shrink-0 items-center bg-[#2b2b2b] pl-[9px] pr-[30px] text-[#b8b8b8]">
        <KeyIcon><text x={9} y={12} textAnchor="middle" fontSize={7} fill="#b4b4b4" stroke="none">Esc</text></KeyIcon>
        <span className="ml-[6px] w-[39px]">Cancel</span>
        <span className="ml-[5px]"><KeyIcon><path d="M13 5v6H6M8 9l-2 2 2 2" /></KeyIcon></span>
        <span className="ml-[7px] w-[40px]">Confirm</span>
        <span className="ml-[16px] w-[101px] whitespace-nowrap">WhDown/Pad+: Add</span>
        <span className="ml-[28px] w-[103px] whitespace-nowrap">WhUp/Pad-: Subtract</span>
        <span className="ml-[29px] w-[58px] whitespace-nowrap">MsPan: Size</span>
        <span className="ml-[25px]"><MouseIcon left /></span>
        <span className="ml-[9px] w-[32px]">Select</span>
        <span className="ml-[10px]"><KeyIcon><path d="M9 4 5 9h2.500v5h3V9H13z" /></KeyIcon></span>
        <span className="ml-[3px]"><MouseIcon left /></span>
        <span className="ml-[9px]">DeSelect</span>
        <div className="flex-1" />
        <span>Sphere | Вершин:34/482 | Рёбер:50/992 | Граней:18/512 | Треуг.:960 | Пам.: 49.4 MiB | v2.82.7</span>
      </div>

      {/* strip under the window */}
      <div className="flex h-[10px] shrink-0">
        <div className="w-[667px] bg-black" />
        <div className="relative flex-1 bg-white">
          <span className="absolute left-[7px] top-0 h-[2px] w-px bg-[#ed1c24]" />
          <span className="absolute left-[59px] top-0 h-[2px] w-px bg-[#ed1c24]" />
          <span className="absolute left-[997px] top-0 h-[2px] w-px bg-[#ed1c24]" />
          <span className="absolute left-[1086px] top-0 h-[2px] w-px bg-[#ed1c24]" />
        </div>
      </div>

      <svg className="absolute left-[1115px] top-[520px] z-20" width={145} height={65} viewBox="1115 520 145 65">
        <path d="M1122 579 1256 528" stroke="#ed1c24" strokeWidth={4} />
      </svg>

      <Note className="left-[505px] top-[30px] h-[121px] w-[724px] text-[35px]" lines={['2 способ выделения "закрашивание",', 'нажмите клавишу С']} />
      <Note className="left-[97px] top-[443px] h-[129px] w-[502px] pt-[1px] text-[35px]" lines={['Убирать выделенные точки,', 'нужно зажать control']} />
      <Note className="left-[1251px] top-[382px] h-[158px] w-[580px] text-[35.500px]" lines={['Выделение будет специальным', 'круглым курсором, его размер', 'можно менять колесиком']} />
      <Note className="left-[570px] top-[869px] h-[76px] w-[487px] text-[35px]" lines={['Выйти из режима ESC']} />
    </div>
  )
}
